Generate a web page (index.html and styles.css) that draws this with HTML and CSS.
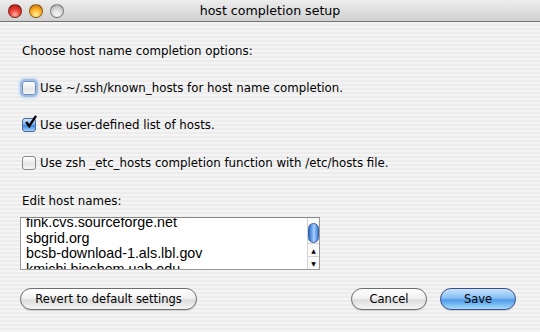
FILE: index.html
```html
<!DOCTYPE html>
<html lang="en">
<head>
  <meta charset="UTF-8" />
  <title>host completion setup</title>
  <link rel="stylesheet" href="styles.css">
</head>
<body>
  <div class="window">
    <div class="titlebar">
      <div class="lights">
        <span class="light red"></span>
        <span class="light yellow"></span>
        <span class="light gray"></span>
      </div>
      <div class="title">host completion setup</div>
    </div>

    <div class="content">
      <p class="prompt">Choose host name completion options:</p>

      <label class="check first">
        <span class="box focus"></span>
        <span>Use ~/.ssh/known_hosts for host name completion.</span>
      </label>
      <label class="check">
        <span class="box checked">
          <svg width="15" height="15" viewBox="0 0 15 15"><path d="M3.2 7 L6.2 11.2 L13 0.8" fill="none" stroke="#000" stroke-width="2.3"/></svg>
        </span>
        <span>Use user-defined list of hosts.</span>
      </label>
      <label class="check">
        <span class="box"></span>
        <span>Use zsh _etc_hosts completion function with /etc/hosts file.</span>
      </label>

      <p class="edit-label">Edit host names:</p>

      <div class="hostlist">
        <div class="lines">
          <div>fink.cvs.sourceforge.net</div>
          <div>sbgrid.org</div>
          <div>bcsb-download-1.als.lbl.gov</div>
          <div>kmichi.biochem.uab.edu</div>
        </div>
        <div class="scrollbar">
          <div class="track"><div class="thumb"></div></div>
          <div class="arrow">&#9650;</div>
          <div class="arrow">&#9660;</div>
        </div>
      </div>

      <div class="buttons">
        <button class="btn revert">Revert to default settings</button>
        <div class="spacer"></div>
        <button class="btn cancel">Cancel</button>
        <button class="btn save">Save</button>
      </div>
    </div>
  </div>
</body>
</html>
```

FILE: styles.css
```css
* {
  margin: 0;
  padding: 0;
  box-sizing: border-box;
}

html, body {
  width: 540px;
  height: 332px;
  overflow: hidden;
  font-family: 'DejaVu Sans', sans-serif;
  font-size: 11.8px;
  color: #000;
}

.window {
  height: 332px;
  background: repeating-linear-gradient(to bottom, #ececec 0, #ececec 2px, #f4f4f4 2px, #f4f4f4 4px);
  display: flex;
  flex-direction: column;
}

.titlebar {
  position: relative;
  height: 22px;
  background: linear-gradient(to bottom, #ededed, #d0d0d0);
  border-bottom: 1px solid #737373;
  border-radius: 5px 5px 0 0;
  display: flex;
  align-items: center;
  justify-content: center;
}

.lights {
  position: absolute;
  left: 8px;
  top: 4px;
  display: flex;
  gap: 7px;
}

.light {
  width: 14px;
  height: 14px;
  border-radius: 50%;
  border: 1px solid rgba(0, 0, 0, 0.4);
}
.light.red {
  background: radial-gradient(circle at 50% 80%, #ffb0a4 0, #ec4034 45%, #a3140e 100%);
}
.light.yellow {
  background: radial-gradient(circle at 50% 80%, #fff1a0 0, #f8ac22 50%, #bd6a05 100%);
}
.light.gray {
  background: radial-gradient(circle at 50% 80%, #fafafa 0, #d8d8d8 50%, #a4a4a4 100%);
}

.title {
  font-size: 12.6px;
  line-height: 16px;
  padding-top: 1px;
}

.content {
  padding: 21px 24px 0 20px;
  display: flex;
  flex-direction: column;
}

.prompt {
  line-height: 16px;
  padding-left: 2px;
}

.check {
  display: flex;
  align-items: center;
  gap: 4px;
  height: 16px;
  margin-top: 21px;
  padding-left: 2px;
}
.check:last-of-type {
  margin-top: 22px;
}

.box {
  width: 14px;
  height: 14px;
  border: 1px solid #8a8a8a;
  border-radius: 3px;
  background: linear-gradient(to bottom, #ffffff, #e6e6e6 60%, #f7f7f7);
  position: relative;
}
.box.focus {
  box-shadow: 0 0 0 2px #9cbde6, 0 0 3px 3px #c3d7f0;
  border-color: #6f8fb8;
}
.box.checked {
  background: linear-gradient(to bottom, #cfe5fb, #6ea9ec 50%, #3b86e0 55%, #a5d0fb);
  border-color: #4a6a9a;
}
.box svg {
  position: absolute;
  left: 0;
  top: -4px;
}

.edit-label {
  line-height: 16px;
  margin-top: 22px;
  padding-left: 2px;
}

.hostlist {
  margin-top: 8px;
  width: 300px;
  height: 53px;
  background: #fff;
  border: 1px solid #999;
  border-top-color: #888;
  display: flex;
  overflow: hidden;
}

.lines {
  flex: 1;
  padding-left: 5px;
  margin-top: -3px;
  font-family: 'Liberation Sans', sans-serif;
  font-size: 14.3px;
  line-height: 15.7px;
  overflow: hidden;
}

.scrollbar {
  width: 12px;
  border-left: 1px solid #d4d4d4;
  display: flex;
  flex-direction: column;
  background: #fafafa;
}
.track {
  flex: 1;
  padding-top: 5px;
}
.thumb {
  width: 11px;
  height: 20px;
  border-radius: 6px;
  border: 1px solid #3a5f9a;
  background: linear-gradient(to right, #2f6cc8, #7db2f3 40%, #a9d0fa 55%, #3b7fdc);
}
.arrow {
  height: 13px;
  font-size: 6px;
  line-height: 13px;
  text-align: center;
  border-top: 1px solid #d4d4d4;
}

.buttons {
  margin-top: 18px;
  display: flex;
  align-items: center;
}
.spacer {
  flex: 1;
}

.btn {
  font-family: 'DejaVu Sans', sans-serif;
  font-size: 11.5px;
  height: 22px;
  border-radius: 11px;
  border: 1px solid #6e6e6e;
  background: linear-gradient(to bottom, #ffffff 0, #f2f2f2 45%, #dcdcdc 55%, #f6f6f6 100%);
  color: #000;
  box-shadow: 0 1px 1px rgba(0, 0, 0, 0.15);
}
.btn.revert {
  width: 177px;
}
.btn.cancel {
  width: 76px;
}
.btn.save {
  width: 76px;
  margin-left: 13px;
  border-color: #3b4f8c;
  background: linear-gradient(to bottom, #c9e3fb 0, #86bff4 45%, #4f9be9 55%, #a6dcfd 100%);
}
```
